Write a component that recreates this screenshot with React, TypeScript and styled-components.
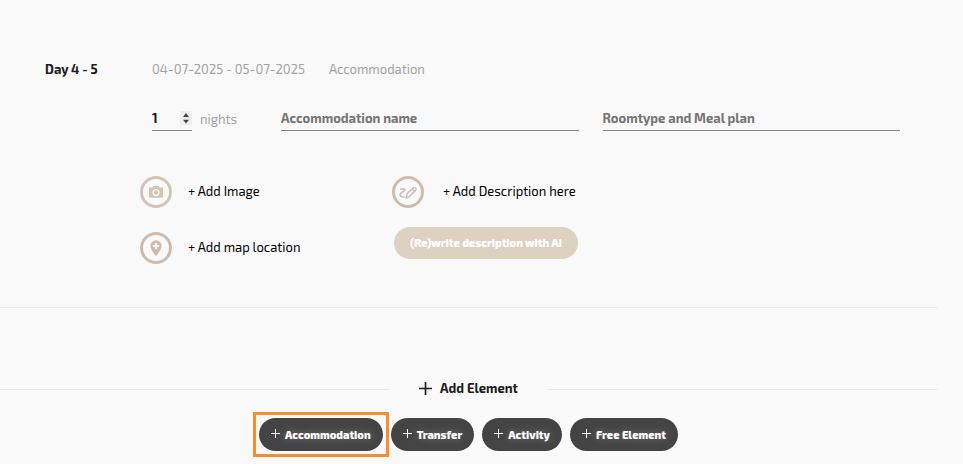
import React from "react";
import styled, { createGlobalStyle } from "styled-components";

const GlobalStyle = createGlobalStyle`
  * { box-sizing: border-box; }
  body {
    margin: 0;
    background: #f9f9f9;
    color: #1c1c1c;
    font-family: "Exo 2", "Noto Sans", "Open Sans", sans-serif;
    font-size: 13px;
    line-height: 20px;
  }
  button, input { font: inherit; }
`;

const Page = styled.main`
  padding: 59px 26px 0 0;
`;

const DayCard = styled.section`
  padding: 0 37px 43px 45px;
  border-bottom: 1px solid #e8e7e0;
`;

const DayHeader = styled.header`
  display: flex;
  align-items: center;
`;

const DayTitle = styled.h2`
  flex: 0 0 107px;
  margin: 0;
  font-size: 13px;
  line-height: 20px;
  font-weight: 700;
`;

const Muted = styled.span`
  color: #a3a3a3;
`;

const Dates = styled(Muted)`
  flex: 0 0 177px;
  white-space: nowrap;
`;

const Fields = styled.div`
  display: flex;
  align-items: flex-end;
  gap: 24px;
  margin: 28px 0 0 107px;
`;

const Nights = styled.label`
  flex: 0 0 105px;
  display: flex;
  align-items: flex-start;
  gap: 8px;
`;

const fieldLine = `
  height: 24px;
  padding: 0 0 2px;
  border: 0;
  border-bottom: 1px solid #858585;
  border-radius: 0;
  background: transparent;
  outline: none;
  font-weight: 700;
`;

const NumberBox = styled.span`
  position: relative;
  display: block;
  width: 40px;
`;

const NightsInput = styled.input`
  ${fieldLine}
  display: block;
  width: 100%;
  color: #1c1c1c;
  appearance: textfield;
  &::-webkit-inner-spin-button {
    appearance: none;
    margin: 0;
  }
`;

const Stepper = styled.svg`
  position: absolute;
  top: 4px;
  right: 0;
  pointer-events: none;
`;

const NightsText = styled(Muted)`
  padding-top: 2px;
`;

const TextInput = styled.input`
  ${fieldLine}
  flex: 1 1 0;
  min-width: 0;
  color: #1c1c1c;
  &::placeholder {
    color: #757575;
    opacity: 1;
  }
`;

const Extras = styled.div`
  display: flex;
  align-items: flex-start;
  margin: 45px 0 0 95px;
`;

const ExtrasColumn = styled.div<{ $gap: number }>`
  flex: 0 0 252px;
  display: flex;
  flex-direction: column;
  align-items: flex-start;
  gap: ${(p) => p.$gap}px;
`;

const AddLink = styled.button<{ $gap: number }>`
  display: flex;
  align-items: center;
  gap: ${(p) => p.$gap}px;
  padding: 0;
  border: 0;
  background: none;
  color: #000;
  font-size: 13px;
  line-height: 20px;
  white-space: nowrap;
  cursor: pointer;
`;

const LinkText = styled.span`
  padding-bottom: 2px;
`;

const Icon = styled.svg`
  display: block;
  flex: none;
`;

const RewriteButton = styled.button`
  height: 32px;
  margin-left: 2px;
  width: 184px;
  padding: 0;
  border: 0;
  border-radius: 16px;
  background: #ddd1c0;
  color: #fff;
  font-size: 11px;
  font-weight: 800;
  white-space: nowrap;
  cursor: pointer;
`;

const AddSection = styled.section`
  padding: 70px 0 13px;
`;

const AddHeading = styled.div`
  display: flex;
  align-items: center;
  gap: 30px;
  &::before,
  &::after {
    content: "";
    flex: 1;
    height: 1px;
    background: #e8e7e0;
  }
`;

const AddTitle = styled.h2`
  display: flex;
  align-items: center;
  gap: 8px;
  margin: 0;
  padding-bottom: 2px;
  font-size: 13px;
  line-height: 20px;
  font-weight: 700;
`;

const ButtonRow = styled.div`
  display: flex;
  justify-content: center;
  gap: 8px;
  margin-top: 18px;
`;

const ButtonFrame = styled.div<{ $highlighted?: boolean }>`
  outline: ${(p) => (p.$highlighted ? "3px solid #ff8a2a" : "none")};
  outline-offset: 3px;
`;

const ElementButton = styled.button`
  display: flex;
  align-items: center;
  gap: 5px;
  height: 33px;
  padding: 0 12px;
  border: 0;
  border-radius: 17px;
  background: #444;
  color: #fff;
  font-size: 11px;
  font-weight: 800;
  text-shadow: 0 0 10px rgba(255, 255, 255, 0.3);
  white-space: nowrap;
  cursor: pointer;
  svg {
    margin-bottom: 2px;
  }
`;

const Plus = ({ size, width }: { size: number; width: number }) => (
  <Icon width={size} height={size} viewBox="0 0 12 12" fill="none" stroke="currentColor" strokeWidth={width} aria-hidden>
    <path d="M6 0V12M0 6H12" />
  </Icon>
);

const CameraIcon = () => (
  <Icon width="32" height="32" viewBox="0 0 32 32" aria-hidden>
    <circle cx="16" cy="16" r="14.5" fill="none" stroke="#d0c5b2" strokeWidth="3" />
    <path fill="#d0c5b2" d="M10 11.5h2.6l.9-1.5h5l.9 1.5H22a1 1 0 0 1 1 1v8.3a1 1 0 0 1-1 1H10a1 1 0 0 1-1-1v-8.3a1 1 0 0 1 1-1z" />
    <circle cx="16" cy="16.6" r="2.9" fill="none" stroke="#f9f9f9" strokeWidth="1.5" />
  </Icon>
);

const PinIcon = () => (
  <Icon width="32" height="32" viewBox="0 0 32 32" aria-hidden>
    <circle cx="16" cy="16" r="14.5" fill="none" stroke="#cdbcae" strokeWidth="3" />
    <path fill="#cdbcae" d="M16 8.2a5.6 5.6 0 0 0-5.6 5.7c0 3.8 5.6 10.3 5.6 10.3s5.6-6.5 5.6-10.3A5.6 5.6 0 0 0 16 8.2z" />
    <path d="M16 10.9v6.2M12.9 14h6.2" stroke="#f9f9f9" strokeWidth="1.9" />
  </Icon>
);

const WriteIcon = () => (
  <Icon width="32" height="32" viewBox="0 0 32 32" fill="none" stroke="#cdbcae" aria-hidden>
    <circle cx="16" cy="16" r="14.5" strokeWidth="3" />
    <g strokeWidth="1.4" strokeLinecap="round" strokeLinejoin="round">
      <path d="M8.6 13.4c1.3-.9 4.3-1.1 4.4.4.1 1.5-5.3 2.6-5 5 .2 1.7 2.4 2.5 4.2 2.2" />
      <path d="M14.1 22l1.1-4.4 6.2-5.7c.8-.7 1.7-.6 2.3 0 .6.7.6 1.6-.1 2.3l-6.1 6.4z" />
      <path d="M20.2 13l2.3 2.3" />
    </g>
  </Icon>
);

const ELEMENTS = ["Accommodation", "Transfer", "Activity", "Free Element"];

export default function App() {
  return (
    <>
      <GlobalStyle />
      <Page>
        <DayCard>
          <DayHeader>
            <DayTitle>Day 4 - 5</DayTitle>
            <Dates>04-07-2025 - 05-07-2025</Dates>
            <Muted>Accommodation</Muted>
          </DayHeader>
          <Fields>
            <Nights>
              <NumberBox>
                <NightsInput type="number" min={1} defaultValue={1} />
                <Stepper width="12" height="14" viewBox="0 0 12 14" aria-hidden>
                  <rect width="12" height="14" fill="#eeeeee" />
                  <path d="M6 2L9 6H3zM6 12.6L9 8.8H3z" fill="#444" />
                </Stepper>
              </NumberBox>
              <NightsText>nights</NightsText>
            </Nights>
            <TextInput type="text" placeholder="Accommodation name" aria-label="Accommodation name" />
            <TextInput type="text" placeholder="Roomtype and Meal plan" aria-label="Roomtype and Meal plan" />
          </Fields>
          <Extras>
            <ExtrasColumn $gap={24}>
              <AddLink type="button" $gap={16}>
                <CameraIcon />
                <LinkText>+ Add Image</LinkText>
              </AddLink>
              <AddLink type="button" $gap={16}>
                <PinIcon />
                <LinkText>+ Add map location</LinkText>
              </AddLink>
            </ExtrasColumn>
            <ExtrasColumn $gap={19}>
              <AddLink type="button" $gap={19}>
                <WriteIcon />
                <LinkText>+ Add Description here</LinkText>
              </AddLink>
              <RewriteButton type="button">(Re)write description with AI</RewriteButton>
            </ExtrasColumn>
          </Extras>
        </DayCard>
        <AddSection>
          <AddHeading>
            <AddTitle>
              <Plus size={13} width={1.5} />
              Add Element
            </AddTitle>
          </AddHeading>
          <ButtonRow>
            {ELEMENTS.map((name, index) => (
              <ButtonFrame key={name} $highlighted={index === 0}>
                <ElementButton type="button">
                  <Plus size={9} width={1.3} />
                  {name}
                </ElementButton>
              </ButtonFrame>
            ))}
          </ButtonRow>
        </AddSection>
      </Page>
    </>
  );
}
